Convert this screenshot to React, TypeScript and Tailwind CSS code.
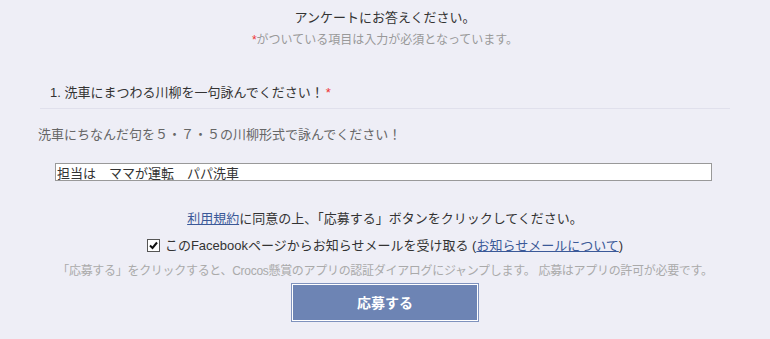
import { useState } from "react";

export default function App() {
  const [answer, setAnswer] = useState("担当は　ママが運転　パパ洗車");
  const [subscribe, setSubscribe] = useState(true);

  return (
    <div
      className="min-h-[339px] w-[770px] bg-[#eeeef6] text-[13px] leading-none text-[#333]"
      style={{ fontFamily: '"Liberation Sans", "Noto Sans CJK JP", sans-serif' }}
    >
      {/* ヘッダー */}
      <div className="flex flex-col items-center pt-[10px]">
        <p className="h-[15px] leading-[15px]">アンケートにお答えください。</p>
        <p className="mt-[8px] h-[15px] text-[12px] leading-[15px] text-[#999]">
          <span className="text-[#e33]">*</span>がついている項目は入力が必須となっています。
        </p>
      </div>

      {/* 設問 */}
      <div className="mx-[40px] mt-[37px] border-b border-[#e0e0ec] pb-[8px] pl-[10px]">
        <p className="h-[15px] leading-[15px]">
          1. 洗車にまつわる川柳を一句詠んでください！<span className="ml-[2px] text-[#e33]">*</span>
        </p>
      </div>
      <p className="ml-[38px] mt-[18px] h-[15px] leading-[15px] text-[#666]">
        洗車にちなんだ句を５・７・５の川柳形式で詠んでください！
      </p>
      <div className="ml-[55px] mt-[21px]">
        <input
          value={answer}
          onChange={(e) => setAnswer(e.target.value)}
          className="block h-[18px] w-[657px] border border-[#999] bg-white px-[1px] text-[13px] leading-[16px] text-[#333] outline-none"
        />
      </div>

      {/* 同意 */}
      <div className="mt-[30px] flex flex-col items-center">
        <p className="h-[15px] leading-[15px]">
          <a href="#" className="text-[#3b5998] underline">利用規約</a>に同意の上、「応募する」ボタンをクリックしてください。
        </p>
        <label className="mt-[12px] flex h-[15px] cursor-pointer items-center gap-[5px] leading-[15px]">
          <input
            type="checkbox"
            checked={subscribe}
            onChange={(e) => setSubscribe(e.target.checked)}
            className="sr-only"
          />
          <span className="flex h-[13px] w-[13px] items-center justify-center border border-[#555] bg-white">
            {subscribe && (
              <svg viewBox="0 0 11 11" className="h-[11px] w-[11px]">
                <path d="M2 5.5 L4.5 8 L9 2.5" fill="none" stroke="#111" strokeWidth="2" />
              </svg>
            )}
          </span>
          <span>
            このFacebookページからお知らせメールを受け取る (
            <a href="#" className="text-[#3b5998] underline">お知らせメールについて</a>)
          </span>
        </label>
        <p className="mt-[11px] h-[14px] text-[12px] leading-[14px] tracking-[-0.3px] text-[#aaa]">
          「応募する」をクリックすると、Crocos懸賞のアプリの認証ダイアログにジャンプします。 応募はアプリの許可が必要です。
        </p>
        <button
          type="button"
          className="mt-[5px] h-[39px] w-[188px] border border-[#7f92bd] bg-[#6d84b4] text-[14px] font-bold text-white shadow-[inset_0_0_0_1px_#fff]"
        >
          応募する
        </button>
      </div>
    </div>
  );
}
